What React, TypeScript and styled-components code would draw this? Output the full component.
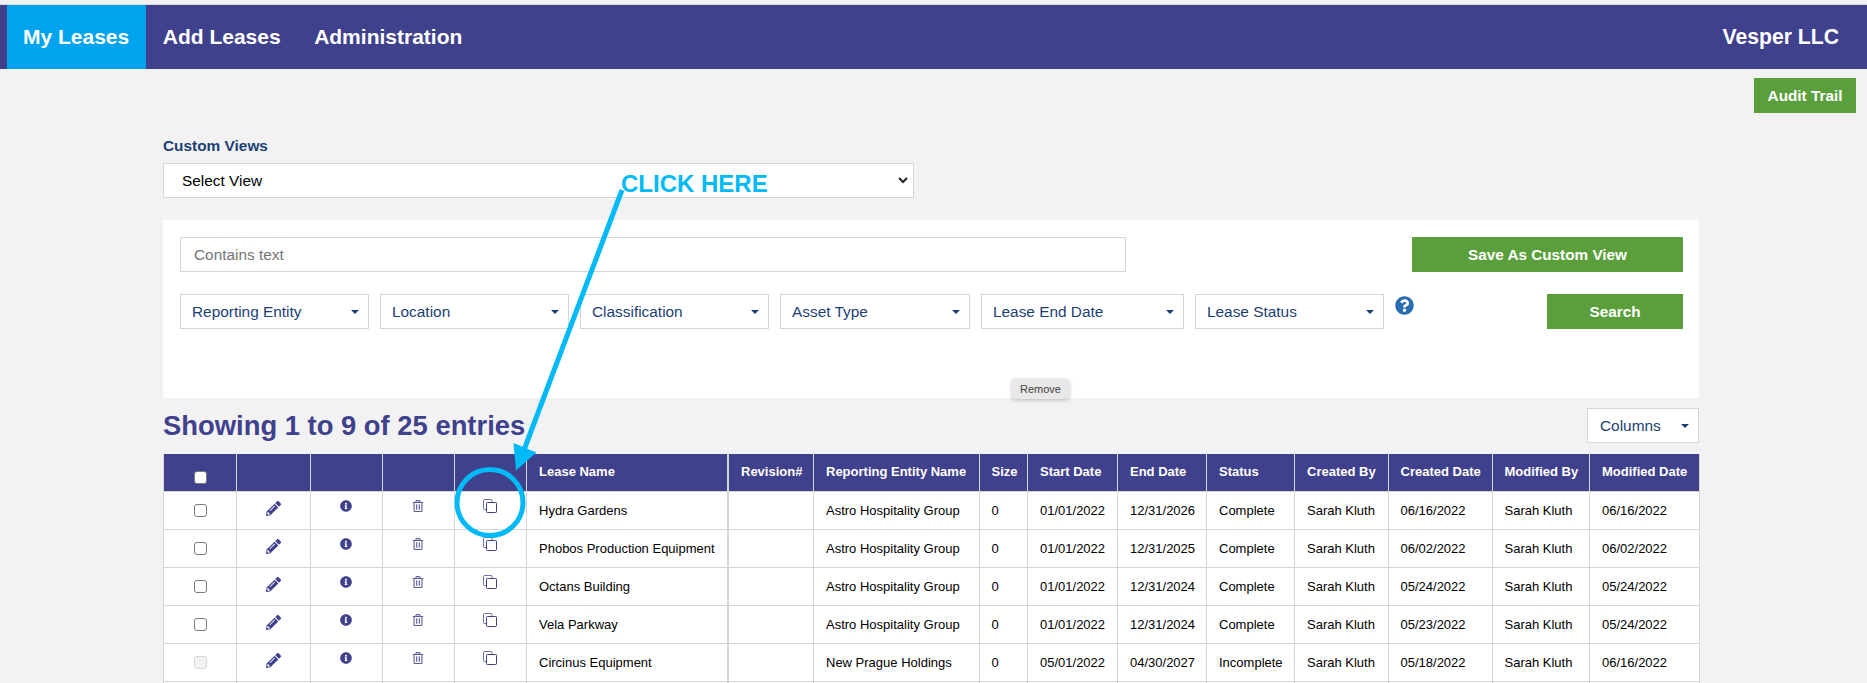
import { FaInfoCircle, FaPencilAlt, FaQuestionCircle, FaRegTrashAlt } from "react-icons/fa";
import styled, { createGlobalStyle } from "styled-components";

const navy = "#40418d";
const ink = "#1c3f77";
const green = "#5a9f3c";
const line = "#d6d6d6";
const callout = "#00b9f7";

const GlobalStyle = createGlobalStyle`
	html, body {
		margin: 0;
		padding: 0;
		background: #f2f2f2;
		font-family: "Liberation Sans", Arial, sans-serif;
	}
	* {
		box-sizing: border-box;
	}
`;

const Page = styled.div`
	position: relative;
	height: 683px;
	overflow: hidden;
	padding-top: 5px;
	background: linear-gradient(#f2f2f2 4px, #dcdcdc 4px, #dcdcdc 5px, #f2f2f2 5px);
`;

const Nav = styled.nav`
	display: flex;
	align-items: stretch;
	height: 64px;
	padding-left: 7px;
	background: ${navy};
	color: #fff;
`;

const NavItem = styled.a<{ $active?: boolean }>`
	display: flex;
	align-items: center;
	padding: 0 16.5px 0 16px;
	margin-right: 1px;
	background: ${(p) => (p.$active ? "#00a4ee" : "transparent")};
	font-size: 21px;
	font-weight: 700;
`;

const Company = styled.div`
	margin-left: auto;
	padding-right: 28px;
	display: flex;
	align-items: center;
	font-size: 21.2px;
	font-weight: 700;
`;

const ActionRow = styled.div`
	display: flex;
	justify-content: flex-end;
	padding: 9px 11px 0 0;
`;

const GreenButton = styled.button<{ $width: number }>`
	width: ${(p) => p.$width}px;
	height: 35px;
	border: 0;
	padding: 0;
	background: ${green};
	color: #fff;
	font: 700 15.3px "Liberation Sans", Arial, sans-serif;
`;

const Content = styled.main`
	padding: 25px 0 0 163px;
	width: 1699px;
`;

const Label = styled.label`
	display: block;
	height: 16px;
	margin-bottom: 9px;
	color: ${ink};
	font-size: 15.4px;
	line-height: 16px;
	font-weight: 700;
`;

const ViewSelect = styled.div`
	display: flex;
	align-items: center;
	justify-content: space-between;
	width: 751px;
	height: 35px;
	padding: 0 5px 0 18px;
	border: 1px solid ${line};
	background: #fff;
	color: #000;
	font-size: 15.4px;
	svg {
		width: 10px;
		height: 7px;
	}
`;

const FilterPanel = styled.section`
	margin-top: 22px;
	height: 178px;
	padding: 17px 16px 0 17px;
	background: #fff;
`;

const SearchRow = styled.div`
	display: flex;
	justify-content: space-between;
`;

const TextInput = styled.div`
	width: 946px;
	height: 35px;
	padding: 0 13px;
	border: 1px solid ${line};
	color: #757575;
	font-size: 15.4px;
	line-height: 33px;
`;

const FilterRow = styled.div`
	display: flex;
	align-items: flex-start;
	margin-top: 22px;
	gap: 11px;
	> button {
		margin-left: auto;
	}
`;

const Dropdown = styled.div<{ $width: number }>`
	display: flex;
	align-items: center;
	justify-content: space-between;
	width: ${(p) => p.$width}px;
	height: 35px;
	padding: 0 9px 0 11px;
	border: 1px solid ${line};
	background: #fff;
	color: ${ink};
	font-size: 15.4px;
`;

const Caret = styled.span`
	width: 0;
	height: 0;
	border-left: 4px solid transparent;
	border-right: 4px solid transparent;
	border-top: 4px solid ${ink};
`;

const HelpIcon = styled(FaQuestionCircle)`
	width: 19px;
	height: 19px;
	margin-top: 2px;
	color: #2a6cb0;
`;

const Tooltip = styled.div`
	position: absolute;
	left: 1012px;
	top: 379px;
	width: 57px;
	height: 20px;
	border-radius: 3px;
	background: #e8e8e8;
	box-shadow: 0 1px 4px rgba(0, 0, 0, 0.25);
	color: #444;
	font-size: 11px;
	line-height: 20px;
	text-align: center;
`;

const ListHeader = styled.div`
	display: flex;
	align-items: center;
	justify-content: space-between;
	height: 35px;
	margin-top: 10px;
	margin-bottom: 11px;
`;

const Heading = styled.h2`
	margin: 0;
	padding-top: 1px;
	color: ${navy};
	font-size: 27.4px;
	font-weight: 700;
`;

const ColumnsButton = styled(Dropdown)`
	padding: 0 9px 0 12px;
`;

const Table = styled.table`
	width: 1536px;
	table-layout: fixed;
	border-collapse: collapse;
	font-size: 13px;

	tr > :nth-child(6) {
		border-right-width: 2px;
	}
`;

const Col = styled.col<{ $w: number }>`
	width: ${(p) => p.$w}px;
`;

const HeadCell = styled.th`
	height: 37px;
	padding: 0 12px 1px;
	border: 1px solid ${line};
	border-top: 0;
	background: ${navy};
	color: #fff;
	font-weight: 700;
	text-align: left;
	white-space: nowrap;
`;

const Cell = styled.td`
	height: 38px;
	padding: 0 12px;
	border: 1px solid ${line};
	background: #fff;
	color: #000;
	white-space: nowrap;
`;

const IconCell = styled(Cell)<{ $muted?: boolean; $low?: boolean }>`
	padding: 0 0 ${(p) => (p.$low ? 4 : 9)}px;
	text-align: center;
	color: ${navy};
	line-height: 0;
	svg {
		opacity: ${(p) => (p.$muted ? 0.85 : 1)};
	}
`;

const CheckCell = styled(Cell)`
	padding: 0;
	text-align: center;
	line-height: 0;
`;

const HeadCheckCell = styled(HeadCell)`
	padding: 10px 0 0;
	text-align: center;
	line-height: 0;
`;

const Check = styled.input.attrs({ type: "checkbox", readOnly: true })`
	appearance: none;
	width: 13px;
	height: 13px;
	margin: 0;
	border: 1px solid #7a7a7a;
	border-radius: 3px;
	background: #fff;

	&:disabled {
		border-color: #d9d9d9;
		background: #f2f2f2;
	}
`;

const Overlay = styled.svg`
	position: absolute;
	left: 0;
	top: 0;
	pointer-events: none;
`;

const ClickHere = styled.div`
	position: absolute;
	left: 621px;
	top: 170px;
	color: ${callout};
	font-size: 24px;
	line-height: 28px;
	font-weight: 700;
`;

const CopyIcon = () => (
	<svg width="14" height="14" viewBox="0 0 14 14" fill="none" stroke={navy} strokeWidth="1">
		<path d="M3.5 10.5H1.5a1 1 0 0 1-1-1V1.5a1 1 0 0 1 1-1H8a1 1 0 0 1 1 1v2" strokeOpacity="0.75" />
		<rect x="3.5" y="3.5" width="10" height="10" rx="0.8" />
	</svg>
);

const widths = [73, 73.5, 72.5, 71.5, 72.5, 201.5, 85.5, 165.5, 48.5, 90, 89, 88, 93.5, 104, 97.5, 110];

const headers = [
	"Lease Name",
	"Revision#",
	"Reporting Entity Name",
	"Size",
	"Start Date",
	"End Date",
	"Status",
	"Created By",
	"Created Date",
	"Modified By",
	"Modified Date",
];

const rows = [
	["Hydra Gardens", "", "Astro Hospitality Group", "0", "01/01/2022", "12/31/2026", "Complete", "Sarah Kluth", "06/16/2022", "Sarah Kluth", "06/16/2022"],
	["Phobos Production Equipment", "", "Astro Hospitality Group", "0", "01/01/2022", "12/31/2025", "Complete", "Sarah Kluth", "06/02/2022", "Sarah Kluth", "06/02/2022"],
	["Octans Building", "", "Astro Hospitality Group", "0", "01/01/2022", "12/31/2024", "Complete", "Sarah Kluth", "05/24/2022", "Sarah Kluth", "05/24/2022"],
	["Vela Parkway", "", "Astro Hospitality Group", "0", "01/01/2022", "12/31/2024", "Complete", "Sarah Kluth", "05/23/2022", "Sarah Kluth", "05/24/2022"],
	["Circinus Equipment", "", "New Prague Holdings", "0", "05/01/2022", "04/30/2027", "Incomplete", "Sarah Kluth", "05/18/2022", "Sarah Kluth", "06/16/2022"],
];

const filters = [
	{ name: "Reporting Entity", width: 189 },
	{ name: "Location", width: 189 },
	{ name: "Classification", width: 189 },
	{ name: "Asset Type", width: 190 },
	{ name: "Lease End Date", width: 203 },
	{ name: "Lease Status", width: 189 },
];

const App = () => (
	<Page>
		<GlobalStyle />
		<Nav>
			<NavItem $active>My Leases</NavItem>
			<NavItem>Add Leases</NavItem>
			<NavItem>Administration</NavItem>
			<Company>Vesper LLC</Company>
		</Nav>
		<ActionRow>
			<GreenButton $width={102}>Audit Trail</GreenButton>
		</ActionRow>
		<Content>
			<Label>Custom Views</Label>
			<ViewSelect>
				Select View
				<svg viewBox="0 0 10 7" fill="none" stroke="#222" strokeWidth="2">
					<path d="M1 1l4 4 4-4" />
				</svg>
			</ViewSelect>
			<FilterPanel>
				<SearchRow>
					<TextInput>Contains text</TextInput>
					<GreenButton $width={271}>Save As Custom View</GreenButton>
				</SearchRow>
				<FilterRow>
					{filters.map((f) => (
						<Dropdown key={f.name} $width={f.width}>
							{f.name}
							<Caret />
						</Dropdown>
					))}
					<HelpIcon />
					<GreenButton $width={136}>Search</GreenButton>
				</FilterRow>
			</FilterPanel>
			<ListHeader>
				<Heading>Showing 1 to 9 of 25 entries</Heading>
				<ColumnsButton $width={112}>
					Columns
					<Caret />
				</ColumnsButton>
			</ListHeader>
			<Table>
				<colgroup>
					{widths.map((w, i) => (
						<Col key={i} $w={w} />
					))}
				</colgroup>
				<thead>
					<tr>
						<HeadCheckCell>
							<Check />
						</HeadCheckCell>
						<HeadCell />
						<HeadCell />
						<HeadCell />
						<HeadCell />
						{headers.map((h) => (
							<HeadCell key={h}>{h}</HeadCell>
						))}
					</tr>
				</thead>
				<tbody>
					{rows.map((row, i) => (
						<tr key={row[0]}>
							<CheckCell>
								<Check disabled={i === 4} />
							</CheckCell>
							<IconCell $low>
								<FaPencilAlt size={15} />
							</IconCell>
							<IconCell>
								<FaInfoCircle size={12} />
							</IconCell>
							<IconCell $muted>
								<FaRegTrashAlt size={12} />
							</IconCell>
							<IconCell>
								<CopyIcon />
							</IconCell>
							{row.map((value, j) => (
								<Cell key={j}>{value}</Cell>
							))}
						</tr>
					))}
					<tr>
						{widths.map((_, i) => (
							<Cell key={i} />
						))}
					</tr>
				</tbody>
			</Table>
		</Content>
		<Tooltip>Remove</Tooltip>
		<Overlay width="1867" height="683" viewBox="0 0 1867 683">
			<line x1="622" y1="190" x2="524" y2="450" stroke={callout} strokeWidth="5" />
			<polygon points="513.5,443 536.5,452.5 516,470.5" fill={callout} />
			<circle cx="490" cy="502.5" r="33" fill="none" stroke={callout} strokeWidth="5" />
		</Overlay>
		<ClickHere>CLICK HERE</ClickHere>
	</Page>
);

export default App;
